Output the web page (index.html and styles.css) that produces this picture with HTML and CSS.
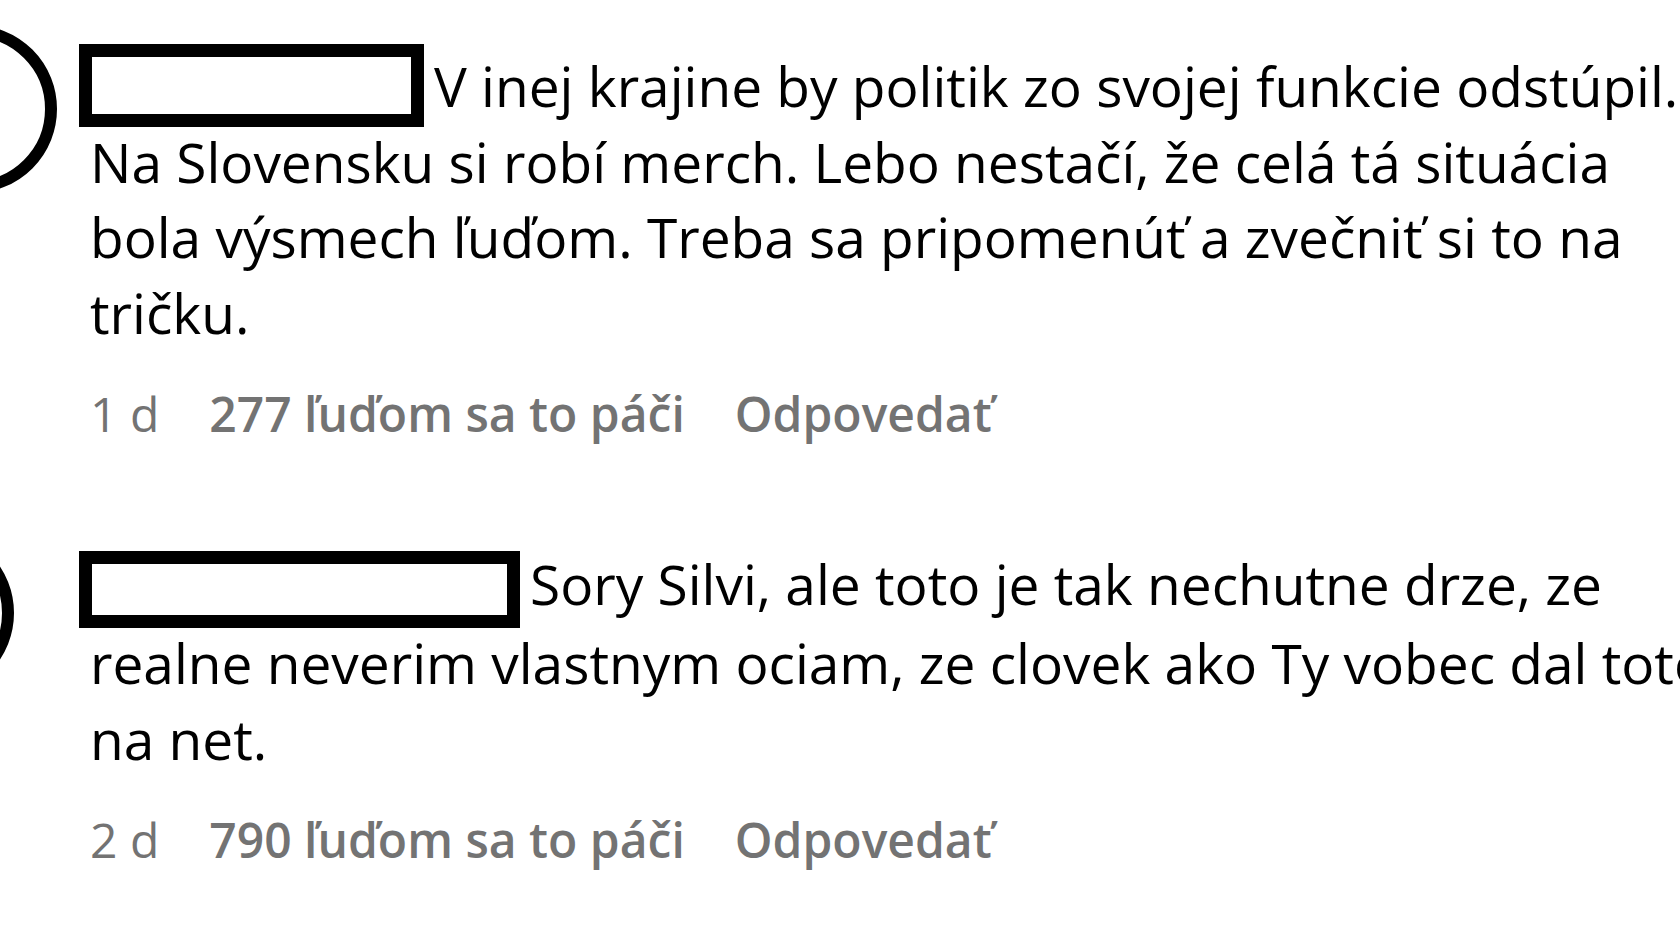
FILE: index.html
```html
<!DOCTYPE html>
<html lang="sk">
<head>
<meta charset="utf-8">
<title>Komentáre</title>
<link rel="stylesheet" href="styles.css">
</head>
<body>
<main class="comments">
  <article class="comment">
    <span class="avatar avatar-first"></span>
    <p class="comment-text"><span class="username username-first"></span>V inej krajine by politik zo svojej funkcie odstúpil.<br>Na Slovensku si robí merch. Lebo nestačí, že celá tá situácia<br>bola výsmech ľuďom. Treba sa pripomenúť a zvečniť si to na<br>tričku.</p>
    <div class="meta">
      <span class="time">1 d</span>
      <span class="likes">277 ľuďom sa to páči</span>
      <span class="reply">Odpovedať</span>
    </div>
  </article>
  <article class="comment">
    <span class="avatar avatar-second"></span>
    <p class="comment-text"><span class="username username-second"></span>Sory Silvi, ale toto je tak nechutne drze, ze<br>realne neverim vlastnym ociam, ze clovek ako Ty vobec dal toto<br>na net.</p>
    <div class="meta">
      <span class="time">2 d</span>
      <span class="likes">790 ľuďom sa to páči</span>
      <span class="reply">Odpovedať</span>
    </div>
  </article>
</main>
</body>
</html>
```
FILE: styles.css
```css
* {
  box-sizing: border-box;
}

html, body {
  margin: 0;
  padding: 0;
  background: #ffffff;
  width: 1680px;
  height: 945px;
  overflow: hidden;
}

body {
  font-family: "Open Sans", "Noto Sans", sans-serif;
  color: #000000;
}

.comments {
  position: relative;
  padding: 48px 0 0 90px;
}

.comment {
  position: relative;
}

.comment + .comment {
  margin-top: 102px;
}

.comment-text {
  margin: 0;
  font-size: 55px;
  line-height: 75.5px;
  white-space: nowrap;
}

.username {
  display: inline-block;
  border: 13px solid #000000;
  background: #ffffff;
  margin-left: -11px;
  margin-right: 10px;
}

.username-first {
  width: 345px;
  height: 83px;
  margin-top: -6px;
  margin-bottom: -6px;
  vertical-align: -14px;
}

.username-second {
  width: 441px;
  height: 77px;
  margin-top: -3px;
  margin-bottom: -3px;
  vertical-align: -20px;
}

.meta {
  display: flex;
  align-items: baseline;
  gap: 50px;
  margin-top: 34px;
  font-size: 48px;
  line-height: 60px;
  color: #737373;
  white-space: nowrap;
}

.time {
  font-weight: 400;
}

.likes,
.reply {
  font-weight: 600;
}

.avatar {
  position: absolute;
  width: 168px;
  height: 168px;
  border: 12px solid #000000;
  border-radius: 50%;
}

.avatar-first {
  left: -201px;
  top: -23px;
}

.avatar-second {
  left: -244px;
  top: -17px;
}
```
